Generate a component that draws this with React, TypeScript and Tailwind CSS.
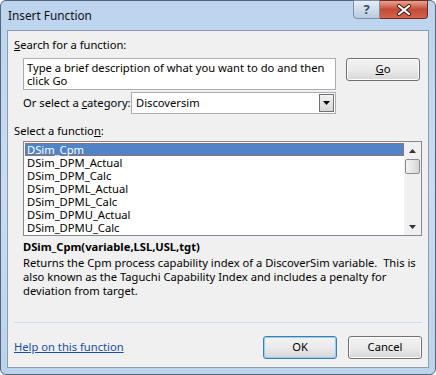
import React from 'react';

const functions = [
  'DSim_Cpm',
  'DSim_DPM_Actual',
  'DSim_DPM_Calc',
  'DSim_DPML_Actual',
  'DSim_DPML_Calc',
  'DSim_DPMU_Actual',
  'DSim_DPMU_Calc',
];

const font = "font-['Noto_Sans',sans-serif]";

const Button = ({ children, primary = false }: { children: React.ReactNode; primary?: boolean }) => (
  <div
    className={
      'flex h-[23px] w-[74px] items-center justify-center rounded-[3px] border bg-gradient-to-b from-[#f2f2f2] via-[#ebebeb] to-[#d6d6d6] text-[11.2px] text-black ' +
      (primary ? 'border-[#3c7fb1] shadow-[inset_0_0_0_1px_#8fd0f3]' : 'border-[#707070] shadow-[inset_0_0_0_1px_#fcfcfc]')
    }
  >
    {children}
  </div>
);

export default function App() {
  return (
    <div className={`${font} flex h-[375px] w-[436px] flex-col rounded-[6px] border border-[#52657c] bg-gradient-to-b from-[#bcd4ee] via-[#c9dcf1] to-[#bcd3ec] px-[6px] pb-[6px] text-[11.2px] text-black`}>
      {/* title bar */}
      <div className="flex h-[29px] items-start justify-between">
        <div className="pl-[1px] pt-[6px] text-[11.8px] text-[#111]">Insert Function</div>
        <div className="mr-[1px] flex h-[19px] -translate-y-[1px]">
          <div className="flex w-[27px] items-center justify-center rounded-bl-[4px] border border-[#7b8ea6] bg-gradient-to-b from-[#e6eef8] via-[#cfdceb] to-[#b9cbe0] text-[13px] font-bold text-[#3d4d61]">
            ?
          </div>
          <div className="flex w-[48px] items-center justify-center rounded-br-[4px] border border-l-0 border-[#6d2a20] bg-gradient-to-b from-[#e8a493] via-[#c44a35] to-[#d4634a]">
            <svg width="16" height="12" viewBox="0 0 16 12">
              <path d="M3 2 L13 10 M13 2 L3 10" stroke="#3a1a14" strokeWidth="4" strokeLinecap="round" />
              <path d="M3 2 L13 10 M13 2 L3 10" stroke="#fff" strokeWidth="2.2" strokeLinecap="round" />
            </svg>
          </div>
        </div>
      </div>

      {/* client */}
      <div className="flex flex-1 flex-col border border-[#8d9db0] bg-[#f0f0f0] px-[6px]">
        <div className="mt-[6px] leading-[16px]">
          <u>S</u>earch for a function:
        </div>
        <div className="mt-[5px] flex items-start gap-[10px] pl-[9px]">
          <div className="h-[32px] w-[313px] whitespace-nowrap border border-[#abadb3] bg-white px-[3px] pt-[2px] leading-[13px]">
            Type a brief description of what you want to do and then
            <br />
            click Go
          </div>
          <Button>
            <u>G</u>o
          </Button>
        </div>
        <div className="mt-[2px] flex items-center pl-[9px]">
          <span className="w-[108px] whitespace-nowrap leading-[16px]">
            Or select a <u>c</u>ategory:
          </span>
          <div className="flex h-[22px] w-[205px] items-center justify-between border border-[#abadb3] bg-white pl-[4px] pr-[1px]">
            <span>Discoversim</span>
            <div className="flex h-[18px] w-[15px] items-center justify-center border border-[#707070] bg-gradient-to-b from-[#f2f2f2] to-[#d6d6d6]">
              <svg width="7" height="4" viewBox="0 0 7 4">
                <path d="M0 0 H7 L3.5 4 Z" fill="#000" />
              </svg>
            </div>
          </div>
        </div>
        <div className="mt-[9px] leading-[16px]">
          Select a functio<u>n</u>:
        </div>
        <div className="ml-[9px] mt-[2px] flex h-[95px] w-[399px] border border-[#828790] bg-white">
          <div className="flex flex-1 flex-col overflow-hidden pl-[1px] pt-[1px]">
            {functions.map((f, i) => (
              <div
                key={f}
                className={
                  'h-[13px] shrink-0 ' +
                  (i === 0
                    ? 'border border-dotted border-[#e0581f] bg-[#4f84c8] pl-[1px] leading-[11px] text-white'
                    : 'pl-[2px] leading-[13px]')
                }
              >
                {f}
              </div>
            ))}
          </div>
          <div className="flex w-[17px] flex-col items-center bg-[#f0f0f0]">
            <div className="flex h-[17px] items-center justify-center">
              <svg width="7" height="4" viewBox="0 0 7 4">
                <path d="M0 4 H7 L3.5 0 Z" fill="#333" />
              </svg>
            </div>
            <div className="h-[15px] w-[15px] rounded-[2px] border border-[#8b8b8b] bg-gradient-to-r from-[#f3f3f3] via-[#e6e6e6] to-[#d4d4d4]" />
            <div className="flex-1" />
            <div className="flex h-[17px] items-center justify-center">
              <svg width="7" height="4" viewBox="0 0 7 4">
                <path d="M0 0 H7 L3.5 4 Z" fill="#333" />
              </svg>
            </div>
          </div>
        </div>
        <div className="ml-[9px] mt-[3px] font-bold leading-[16px]">DSim_Cpm(variable,LSL,USL,tgt)</div>
        <div className="ml-[9px] mt-[1px] whitespace-nowrap leading-[14px]">
          Returns the Cpm process capability index of a DiscoverSim variable.&nbsp; This is
          <br />
          also known as the Taguchi Capability Index and includes a penalty for
          <br />
          deviation from target.
        </div>
        <div className="flex-1" />
        <div className="h-px bg-[#d2dde8]" />
        <div className="mb-[8px] mt-[13px] flex items-center">
          <span className="flex-1 text-[#1a4fa0] underline">Help on this function</span>
          <div className="flex gap-[11px]">
            <Button primary>OK</Button>
            <Button>Cancel</Button>
          </div>
        </div>
      </div>
    </div>
  );
}
